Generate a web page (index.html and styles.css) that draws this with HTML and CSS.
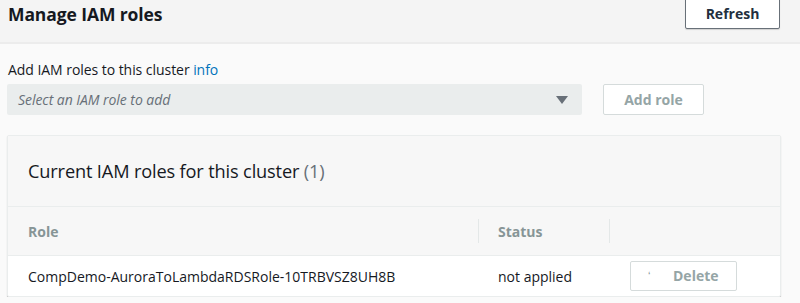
FILE: index.html
```html
<!DOCTYPE html>
<html>
<head>
<meta charset="utf-8">
<link rel="stylesheet" href="styles.css">
</head>
<body>
<div class="header">
  <h1 class="title">Manage IAM roles</h1>
  <button class="btn btn-refresh">Refresh</button>
</div>
<div class="content">
  <div class="label">Add IAM roles to this cluster <a class="info">info</a></div>
  <div class="add-row">
    <div class="select">
      <span class="placeholder">Select an IAM role to add</span>
      <svg class="caret" width="12" height="8" viewBox="0 0 12 8"><path d="M0 0H12L6 8Z" fill="#687078"/></svg>
    </div>
    <button class="btn btn-disabled btn-add">Add role</button>
  </div>
  <div class="panel">
    <div class="panel-head">Current IAM roles for this cluster <span class="count">(1)</span></div>
    <div class="grid">
      <div class="th">Role</div>
      <div class="th sep">Status</div>
      <div class="th sep"></div>
      <div class="td">CompDemo-AuroraToLambdaRDSRole-10TRBVSZ8UH8B</div>
      <div class="td">not applied</div>
      <div class="td action"><button class="btn btn-disabled btn-del"><span class="spin">ʻ</span>Delete</button></div>
    </div>
  </div>
</div>
</body>
</html>
```

FILE: styles.css
```css
* { box-sizing: border-box; }
body {
  margin: 0;
  background: #fafafa;
  font-family: "Open Sans", "Liberation Sans", sans-serif;
  color: #16191f;
  overflow: hidden;
}
.header {
  height: 44px;
  background: #f4f4f4;
  border-bottom: 2px solid #ececec;
  display: flex;
  justify-content: space-between;
  align-items: flex-start;
  padding: 0 20px 0 8px;
}
.title {
  margin: 0;
  font-size: 17.5px;
  line-height: 28px;
  font-weight: 700;
  letter-spacing: -0.1px;
}
.btn {
  font-family: inherit;
  font-weight: 700;
  font-size: 14px;
  background: #fff;
  border-radius: 2px;
  padding: 0;
}
.btn-refresh {
  margin-top: -3px;
  width: 95px;
  height: 32px;
  border: 1px solid #687078;
  color: #232f3e;
  padding-top: 1px;
  box-shadow: 0 1px 1px rgba(0,0,0,0.15);
}
.content {
  padding: 19px 19px 0 7px;
}
.label {
  font-size: 14px;
  line-height: 14px;
  padding-left: 1px;
  letter-spacing: -0.05px;
}
.info { color: #0073bb; }
.add-row {
  display: flex;
  gap: 21px;
  margin-top: 7px;
}
.select {
  width: 575px;
  height: 31px;
  background: #eaeded;
  border-radius: 2px;
  display: flex;
  align-items: center;
  justify-content: space-between;
  padding: 0 14px 0 11px;
}
.placeholder {
  font-style: italic;
  color: #687078;
  font-size: 14px;
  letter-spacing: -0.05px;
}
.btn-disabled {
  border: 1px solid #d5dbdb;
  color: #95a5a6;
  background: #fff;
}
.btn-add {
  width: 101px;
  height: 31px;
}
.panel {
  margin-top: 20px;
  width: 774px;
  border: 1px solid #eaeded;
  border-radius: 2px;
  box-shadow: 0 1px 1px rgba(0,0,0,0.25);
  background: #fff;
}
.panel-head {
  height: 71px;
  background: #f7f7f7;
  border-bottom: 1px solid #eaeded;
  font-size: 18.2px;
  padding: 23px 0 0 20px;
  letter-spacing: -0.15px;
}
.count { color: #687078; }
.grid {
  display: grid;
  grid-template-columns: 470px 131px 1fr;
}
.th {
  height: 49px;
  background: #f7f7f7;
  border-bottom: 1px solid #eaeded;
  color: #879596;
  font-weight: 700;
  font-size: 14px;
  display: flex;
  align-items: center;
  padding-left: 20px;
  position: relative;
}
.sep::before {
  content: "";
  position: absolute;
  left: 0;
  top: 12px;
  height: 24px;
  border-left: 1px solid #e4e8e8;
}
.td {
  height: 40px;
  font-size: 14px;
  display: flex;
  align-items: center;
  padding-left: 20px;
}
.action { padding-left: 21px; }
.btn-del {
  width: 107px;
  height: 30px;
  margin-top: -1px;
  display: flex;
  align-items: center;
  padding-left: 17px;
}
.spin {
  font-weight: 400;
  font-size: 11px;
  color: #879596;
  width: 25px;
  text-align: left;
}
```
